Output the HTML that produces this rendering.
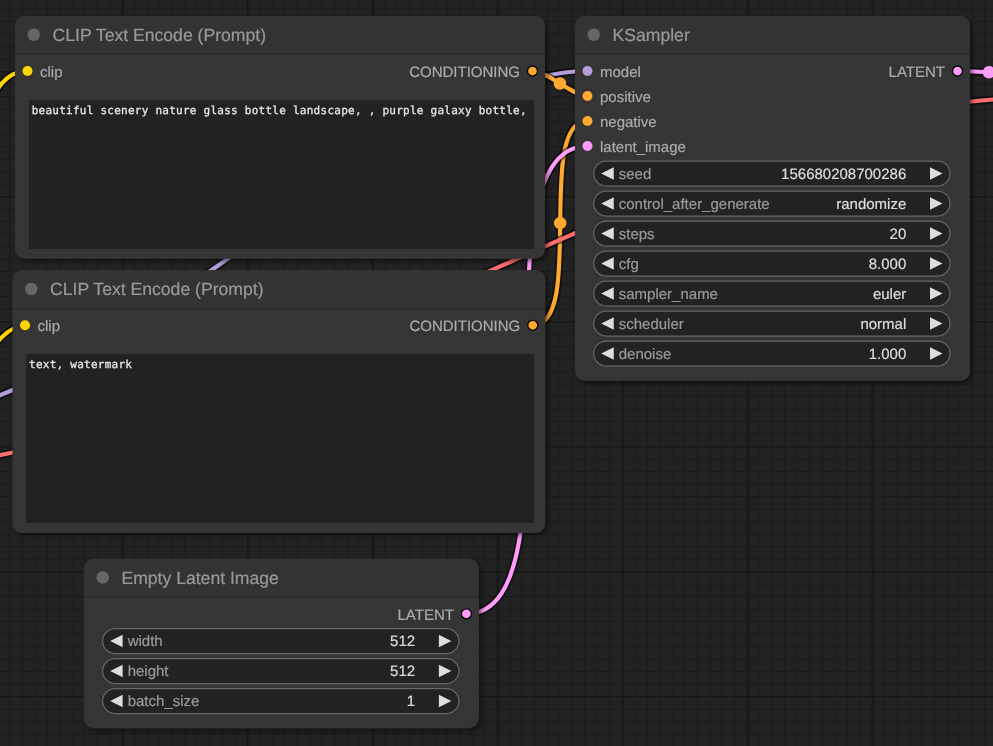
<!DOCTYPE html>
<html><head><meta charset="utf-8"><title>ComfyUI</title>
<style>
html,body{margin:0;padding:0;background:#222;overflow:hidden}
svg{display:block}
text{font-family:"Liberation Sans",Arial,sans-serif;font-size:15px}
svg{will-change:transform;text-rendering:geometricPrecision}
  .t{font-size:17.6px;fill:#999;stroke:#999;stroke-width:.2px}
.s{fill:#AAA;stroke:#AAA;stroke-width:.2px}
.wl{fill:#999;stroke:#999;stroke-width:.2px}
.wv{fill:#DDD;stroke:#DDD;stroke-width:.2px}
.m{font-family:"DejaVu Sans Mono","Liberation Mono",monospace;font-size:11px;letter-spacing:.255px;fill:#e6e6e6;stroke:#e6e6e6;stroke-width:.3px}
</style></head><body>
<svg width="993" height="746" viewBox="0 0 993 746">
<defs>
<pattern id="grid" width="125" height="125" patternUnits="userSpaceOnUse" x="-3.45" y="71"><rect width="125" height="125" fill="#222"/><rect x="12.5" y="0" width="1.25" height="125" fill="#1b1b1b"/><rect x="0" y="12.5" width="125" height="1.25" fill="#1b1b1b"/><rect x="25" y="0" width="1.25" height="125" fill="#1b1b1b"/><rect x="0" y="25" width="125" height="1.25" fill="#1b1b1b"/><rect x="37.5" y="0" width="1.25" height="125" fill="#1b1b1b"/><rect x="0" y="37.5" width="125" height="1.25" fill="#1b1b1b"/><rect x="50" y="0" width="1.25" height="125" fill="#1b1b1b"/><rect x="0" y="50" width="125" height="1.25" fill="#1b1b1b"/><rect x="62.5" y="0" width="1.25" height="125" fill="#1b1b1b"/><rect x="0" y="62.5" width="125" height="1.25" fill="#1b1b1b"/><rect x="75" y="0" width="1.25" height="125" fill="#1b1b1b"/><rect x="0" y="75" width="125" height="1.25" fill="#1b1b1b"/><rect x="87.5" y="0" width="1.25" height="125" fill="#1b1b1b"/><rect x="0" y="87.5" width="125" height="1.25" fill="#1b1b1b"/><rect x="100" y="0" width="1.25" height="125" fill="#1b1b1b"/><rect x="0" y="100" width="125" height="1.25" fill="#1b1b1b"/><rect x="112.5" y="0" width="1.25" height="125" fill="#1b1b1b"/><rect x="0" y="112.5" width="125" height="1.25" fill="#1b1b1b"/><rect x="0" y="0" width="2.5" height="125" fill="#181818"/><rect x="0" y="0" width="125" height="1.5" fill="#171717"/></pattern>
<filter id="sh" x="-5%" y="-5%" width="110%" height="110%"><feDropShadow dx="2.5" dy="2.5" stdDeviation="1.9" flood-color="#000" flood-opacity=".5"/></filter>
</defs>
<rect width="993" height="746" fill="url(#grid)"/>
<g fill="none">
<path d="M-86 439C-46.27 439 -14.73 325.25 25 325.25" stroke="#000" stroke-opacity=".5" stroke-width="7.8"/><path d="M-86 439C-46.27 439 -14.73 325.25 25 325.25" stroke="#FFD500" stroke-width="4.2"/><circle cx="-30.5" cy="382.12" r="6.25" fill="#FFD500"/>
<path d="M-86 439C10.28 439 -68.78 71 27.5 71" stroke="#000" stroke-opacity=".5" stroke-width="7.8"/><path d="M-86 439C10.28 439 -68.78 71 27.5 71" stroke="#FFD500" stroke-width="4.2"/><circle cx="-29.25" cy="255" r="6.25" fill="#FFD500"/>
<path d="M-86 414C102.95 414 398.55 71 587.5 71" stroke="#000" stroke-opacity=".5" stroke-width="7.8"/><path d="M-86 414C102.95 414 398.55 71 587.5 71" stroke="#B39DDB" stroke-width="4.2"/><circle cx="250.75" cy="242.5" r="6.25" fill="#B39DDB"/>
<path d="M532.4 71C547.53 71 572.37 96 587.5 96" stroke="#000" stroke-opacity=".5" stroke-width="7.8"/><path d="M532.4 71C547.53 71 572.37 96 587.5 96" stroke="#FFA931" stroke-width="4.2"/><circle cx="559.95" cy="83.5" r="6.25" fill="#FFA931"/>
<path d="M532.9 325.25C585.76 325.25 534.64 121 587.5 121" stroke="#000" stroke-opacity=".5" stroke-width="7.8"/><path d="M532.9 325.25C585.76 325.25 534.64 121 587.5 121" stroke="#FFA931" stroke-width="4.2"/><circle cx="560.2" cy="223.12" r="6.25" fill="#FFA931"/>
<path d="M466.2 614C587.07 614 466.63 146 587.5 146" stroke="#000" stroke-opacity=".5" stroke-width="7.8"/><path d="M466.2 614C587.07 614 466.63 146 587.5 146" stroke="#FF9CF9" stroke-width="4.2"/><circle cx="526.85" cy="380" r="6.25" fill="#FF9CF9"/>
<path d="M957.5 71C973.26 71 1004.74 73.5 1020.5 73.5" stroke="#000" stroke-opacity=".5" stroke-width="7.8"/><path d="M957.5 71C973.26 71 1004.74 73.5 1020.5 73.5" stroke="#FF9CF9" stroke-width="4.2"/><circle cx="989" cy="72.25" r="6.25" fill="#FF9CF9"/>
<path d="M-86 464C205.21 464 728.79 98.5 1020 98.5" stroke="#000" stroke-opacity=".5" stroke-width="7.8"/><path d="M-86 464C205.21 464 728.79 98.5 1020 98.5" stroke="#FF6E6E" stroke-width="4.2"/><circle cx="467" cy="281.25" r="6.25" fill="#FF6E6E"/>
</g>
<g transform="translate(12.5 270.25)"><rect width="532.75" height="262.85" rx="10" fill="#353535" filter="url(#sh)"/><path d="M0 37.5V10A10 10 0 0 1 10 0H522.75A10 10 0 0 1 532.75 10V37.5Z" fill="#333"/><rect y="37.7" width="532.75" height="1.3" fill="#000" fill-opacity=".2"/><circle cx="18.75" cy="18.75" r="6.25" fill="#666"/><text class="t" x="37.5" y="25">CLIP Text Encode (Prompt)</text><circle cx="12.5" cy="55" r="5" fill="#FFD500"/><text class="s" x="25" y="60.75">clip</text><circle cx="520.25" cy="55" r="5" fill="#FFA931" stroke="#000" stroke-width="1.25"/><text class="s" x="507.75" y="60.75" text-anchor="end">CONDITIONING</text><rect x="13.75" y="83.85" width="507.55" height="168.8" fill="#222"/><text class="m" x="16.5" y="97.45">text, watermark</text></g>
<g transform="translate(15 16)"><rect width="530" height="242.7" rx="10" fill="#353535" filter="url(#sh)"/><path d="M0 37.5V10A10 10 0 0 1 10 0H520A10 10 0 0 1 530 10V37.5Z" fill="#333"/><rect y="37.7" width="530" height="1.3" fill="#000" fill-opacity=".2"/><circle cx="18.75" cy="18.75" r="6.25" fill="#666"/><text class="t" x="37.5" y="25">CLIP Text Encode (Prompt)</text><circle cx="12.5" cy="55" r="5" fill="#FFD500"/><text class="s" x="25" y="61">clip</text><circle cx="517.5" cy="55" r="5" fill="#FFA931" stroke="#000" stroke-width="1.25"/><text class="s" x="505" y="61" text-anchor="end">CONDITIONING</text><rect x="13.9" y="84.2" width="505.1" height="148.8" fill="#222"/><text class="m" x="16.65" y="97.8">beautiful scenery nature glass bottle landscape, , purple galaxy bottle,</text></g>
<g transform="translate(83.9 558.75)"><rect width="395" height="169.55" rx="10" fill="#353535" filter="url(#sh)"/><path d="M0 37.5V10A10 10 0 0 1 10 0H385A10 10 0 0 1 395 10V37.5Z" fill="#333"/><rect y="37.7" width="395" height="1.3" fill="#000" fill-opacity=".2"/><circle cx="18.75" cy="18.75" r="6.25" fill="#666"/><text class="t" x="37.5" y="25">Empty Latent Image</text><circle cx="382.5" cy="55" r="5" fill="#FF9CF9" stroke="#000" stroke-width="1.25"/><text class="s" x="370" y="61.25" text-anchor="end">LATENT</text><rect x="18.75" y="69.8" width="356.25" height="25" rx="12.5" fill="#222" stroke="#666" stroke-width="1.25"/><path d="M38.75 76.05 L26.25 82.3 L38.75 88.55Z" fill="#DDD"/><path d="M355 76.05 L367.5 82.3 L355 88.55Z" fill="#DDD"/><text class="wl" x="43.75" y="87.3">width</text><text class="wv" x="331.25" y="87.3" text-anchor="end">512</text><rect x="18.75" y="99.8" width="356.25" height="25" rx="12.5" fill="#222" stroke="#666" stroke-width="1.25"/><path d="M38.75 106.05 L26.25 112.3 L38.75 118.55Z" fill="#DDD"/><path d="M355 106.05 L367.5 112.3 L355 118.55Z" fill="#DDD"/><text class="wl" x="43.75" y="117.3">height</text><text class="wv" x="331.25" y="117.3" text-anchor="end">512</text><rect x="18.75" y="129.8" width="356.25" height="25" rx="12.5" fill="#222" stroke="#666" stroke-width="1.25"/><path d="M38.75 136.05 L26.25 142.3 L38.75 148.55Z" fill="#DDD"/><path d="M355 136.05 L367.5 142.3 L355 148.55Z" fill="#DDD"/><text class="wl" x="43.75" y="147.3">batch_size</text><text class="wv" x="331.25" y="147.3" text-anchor="end">1</text></g>
<g transform="translate(575 16)"><rect width="395" height="365" rx="10" fill="#353535" filter="url(#sh)"/><path d="M0 37.5V10A10 10 0 0 1 10 0H385A10 10 0 0 1 395 10V37.5Z" fill="#333"/><rect y="37.7" width="395" height="1.3" fill="#000" fill-opacity=".2"/><circle cx="18.75" cy="18.75" r="6.25" fill="#666"/><text class="t" x="37.5" y="25">KSampler</text><circle cx="12.5" cy="55" r="5" fill="#B39DDB"/><text class="s" x="25" y="61">model</text><circle cx="12.5" cy="80" r="5" fill="#FFA931"/><text class="s" x="25" y="86">positive</text><circle cx="12.5" cy="105" r="5" fill="#FFA931"/><text class="s" x="25" y="111">negative</text><circle cx="12.5" cy="130" r="5" fill="#FF9CF9"/><text class="s" x="25" y="136">latent_image</text><circle cx="382.5" cy="55" r="5" fill="#FF9CF9" stroke="#000" stroke-width="1.25"/><text class="s" x="370" y="61" text-anchor="end">LATENT</text><rect x="18.75" y="145" width="356.25" height="25" rx="12.5" fill="#222" stroke="#666" stroke-width="1.25"/><path d="M38.75 151.25 L26.25 157.5 L38.75 163.75Z" fill="#DDD"/><path d="M355 151.25 L367.5 157.5 L355 163.75Z" fill="#DDD"/><text class="wl" x="43.75" y="162.5">seed</text><text class="wv" x="331.25" y="162.5" text-anchor="end">156680208700286</text><rect x="18.75" y="175" width="356.25" height="25" rx="12.5" fill="#222" stroke="#666" stroke-width="1.25"/><path d="M38.75 181.25 L26.25 187.5 L38.75 193.75Z" fill="#DDD"/><path d="M355 181.25 L367.5 187.5 L355 193.75Z" fill="#DDD"/><text class="wl" x="43.75" y="192.5">control_after_generate</text><text class="wv" x="331.25" y="192.5" text-anchor="end">randomize</text><rect x="18.75" y="205" width="356.25" height="25" rx="12.5" fill="#222" stroke="#666" stroke-width="1.25"/><path d="M38.75 211.25 L26.25 217.5 L38.75 223.75Z" fill="#DDD"/><path d="M355 211.25 L367.5 217.5 L355 223.75Z" fill="#DDD"/><text class="wl" x="43.75" y="222.5">steps</text><text class="wv" x="331.25" y="222.5" text-anchor="end">20</text><rect x="18.75" y="235" width="356.25" height="25" rx="12.5" fill="#222" stroke="#666" stroke-width="1.25"/><path d="M38.75 241.25 L26.25 247.5 L38.75 253.75Z" fill="#DDD"/><path d="M355 241.25 L367.5 247.5 L355 253.75Z" fill="#DDD"/><text class="wl" x="43.75" y="252.5">cfg</text><text class="wv" x="331.25" y="252.5" text-anchor="end">8.000</text><rect x="18.75" y="265" width="356.25" height="25" rx="12.5" fill="#222" stroke="#666" stroke-width="1.25"/><path d="M38.75 271.25 L26.25 277.5 L38.75 283.75Z" fill="#DDD"/><path d="M355 271.25 L367.5 277.5 L355 283.75Z" fill="#DDD"/><text class="wl" x="43.75" y="282.5">sampler_name</text><text class="wv" x="331.25" y="282.5" text-anchor="end">euler</text><rect x="18.75" y="295" width="356.25" height="25" rx="12.5" fill="#222" stroke="#666" stroke-width="1.25"/><path d="M38.75 301.25 L26.25 307.5 L38.75 313.75Z" fill="#DDD"/><path d="M355 301.25 L367.5 307.5 L355 313.75Z" fill="#DDD"/><text class="wl" x="43.75" y="312.5">scheduler</text><text class="wv" x="331.25" y="312.5" text-anchor="end">normal</text><rect x="18.75" y="325" width="356.25" height="25" rx="12.5" fill="#222" stroke="#666" stroke-width="1.25"/><path d="M38.75 331.25 L26.25 337.5 L38.75 343.75Z" fill="#DDD"/><path d="M355 331.25 L367.5 337.5 L355 343.75Z" fill="#DDD"/><text class="wl" x="43.75" y="342.5">denoise</text><text class="wv" x="331.25" y="342.5" text-anchor="end">1.000</text></g>
</svg>
</body></html>
